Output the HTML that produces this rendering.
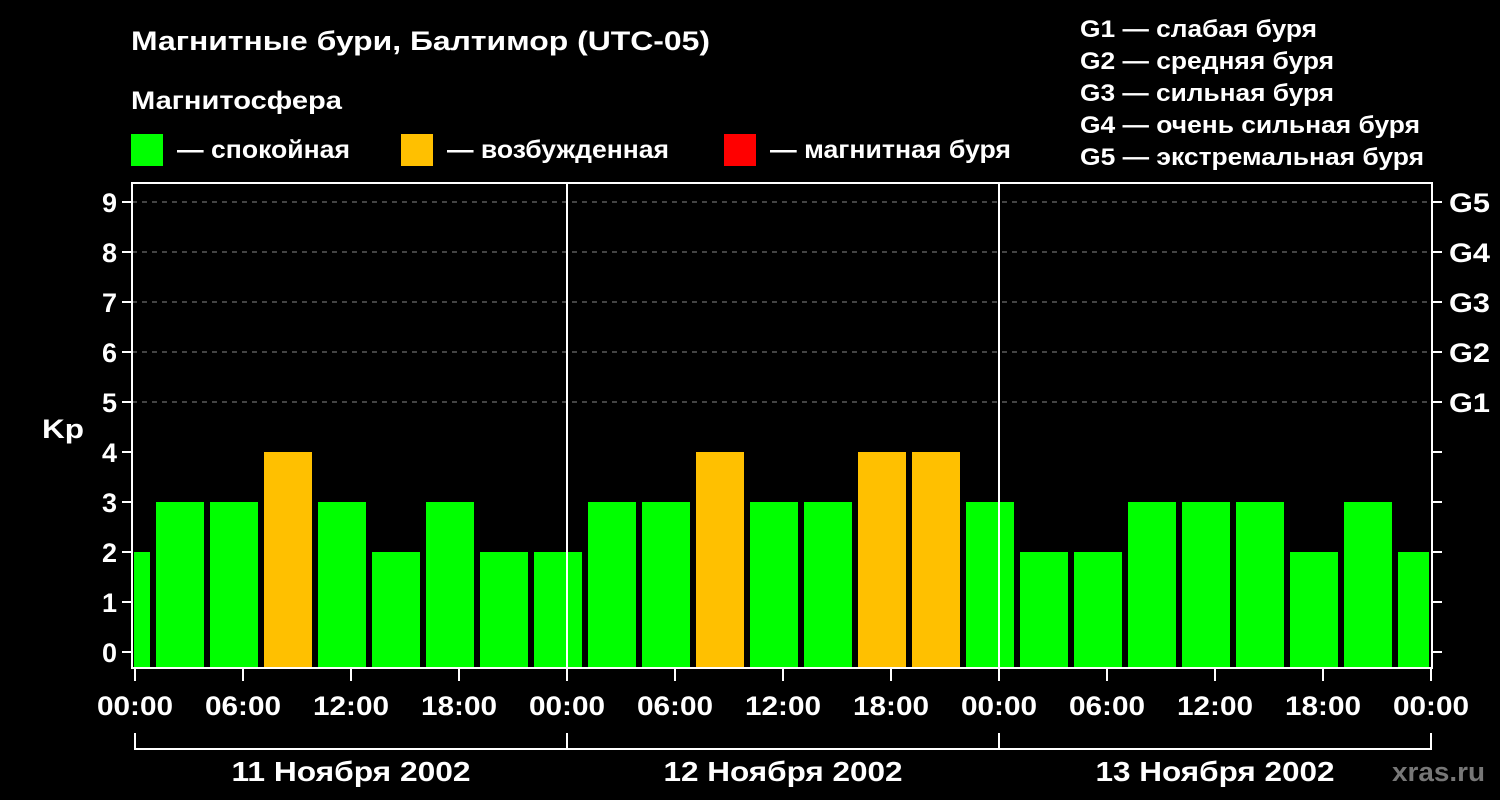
<!DOCTYPE html>
<html><head><meta charset="utf-8"><style>body{margin:0;background:#000}svg{display:block}text{font-family:"Liberation Sans",sans-serif;font-weight:bold;fill:#fff}</style></head><body>
<svg width="1500" height="800" viewBox="0 0 1500 800">
<rect width="1500" height="800" fill="#000"/>
<text x="131" y="50" font-size="27" textLength="579" lengthAdjust="spacingAndGlyphs">Магнитные бури, Балтимор (UTC-05)</text>
<text x="131" y="109" font-size="25" textLength="211" lengthAdjust="spacingAndGlyphs">Магнитосфера</text>
<rect x="131" y="134" width="32" height="32" fill="#00ff00"/>
<text x="177" y="158" font-size="25" textLength="173" lengthAdjust="spacingAndGlyphs">— спокойная</text>
<rect x="401" y="134" width="32" height="32" fill="#ffc000"/>
<text x="447" y="158" font-size="25" textLength="222" lengthAdjust="spacingAndGlyphs">— возбужденная</text>
<rect x="724" y="134" width="32" height="32" fill="#ff0000"/>
<text x="770" y="158" font-size="25" textLength="241" lengthAdjust="spacingAndGlyphs">— магнитная буря</text>
<g font-size="24">
<text x="1080" y="37" textLength="237" lengthAdjust="spacingAndGlyphs">G1 — слабая буря</text>
<text x="1080" y="69" textLength="254" lengthAdjust="spacingAndGlyphs">G2 — средняя буря</text>
<text x="1080" y="101" textLength="254" lengthAdjust="spacingAndGlyphs">G3 — сильная буря</text>
<text x="1080" y="133" textLength="340" lengthAdjust="spacingAndGlyphs">G4 — очень сильная буря</text>
<text x="1080" y="165" textLength="344" lengthAdjust="spacingAndGlyphs">G5 — экстремальная буря</text>
</g>
<g id="bars"></g>
<g stroke="#888" stroke-dasharray="5,5" stroke-width="1">
<line x1="132" x2="1432" y1="202" y2="202"/><line x1="132" x2="1432" y1="252" y2="252"/><line x1="132" x2="1432" y1="302" y2="302"/><line x1="132" x2="1432" y1="352" y2="352"/><line x1="132" x2="1432" y1="402" y2="402"/>
</g>
<g stroke="#fff" stroke-width="2" fill="none">
<rect x="132" y="183" width="1300" height="485"/>
<line x1="567" y1="183" x2="567" y2="668"/><line x1="999" y1="183" x2="999" y2="668"/>
<path d="M135 733V749H1431V733M567 733V749M999 733V749"/>
</g>
<g font-size="27" text-anchor="end" id="yl"></g>
<text x="42" y="438" font-size="27" textLength="42" lengthAdjust="spacingAndGlyphs">Kp</text>
<g font-size="27" id="gl"></g>
<g font-size="27" text-anchor="middle" id="xl"></g>
<g font-size="28" text-anchor="middle">
<text x="351" y="781" textLength="239" lengthAdjust="spacingAndGlyphs">11 Ноября 2002</text>
<text x="783" y="781" textLength="239" lengthAdjust="spacingAndGlyphs">12 Ноября 2002</text>
<text x="1215" y="781" textLength="239" lengthAdjust="spacingAndGlyphs">13 Ноября 2002</text>
</g>
<text x="1392" y="781" font-size="27" style="fill:#777" textLength="93" lengthAdjust="spacingAndGlyphs">xras.ru</text>
</svg>
<script>
var ns="http://www.w3.org/2000/svg";function el(p,t,a,tx){var e=document.createElementNS(ns,t);for(var k in a)e.setAttribute(k,a[k]);if(tx!=null)e.textContent=tx;document.getElementById(p).appendChild(e);}
var v=[2,3,3,4,3,2,3,2,2,3,3,4,3,3,4,4,3,2,2,3,3,3,2,3,2];
v.forEach(function(k,i){var c=126+54*i,x0=Math.max(c-24,134),x1=Math.min(c+24,1429);el("bars","rect",{x:x0,y:652-50*k,width:x1-x0,height:16+50*k,fill:k>=4?"#ffc000":"#00ff00"});});
for(var k=0;k<=9;k++){var y=652-50*k;el("yl","text",{x:117,y:y+10},k);el("yl","line",{x1:122,x2:132,y1:y,y2:y,stroke:"#fff","stroke-width":2});el("yl","line",{x1:1432,x2:1442,y1:y,y2:y,stroke:"#fff","stroke-width":2});if(k>=5)el("gl","text",{x:1449,y:y+10,textLength:41,lengthAdjust:"spacingAndGlyphs"},"G"+(k-4));}
var L=["00:00","06:00","12:00","18:00"];for(var i=0;i<=12;i++){var x=135+108*i;el("xl","text",{x:x,y:715,textLength:76,lengthAdjust:"spacingAndGlyphs"},L[i%4]);el("xl","line",{x1:x,x2:x,y1:668,y2:681,stroke:"#fff","stroke-width":2});}
</script>
</body></html>
